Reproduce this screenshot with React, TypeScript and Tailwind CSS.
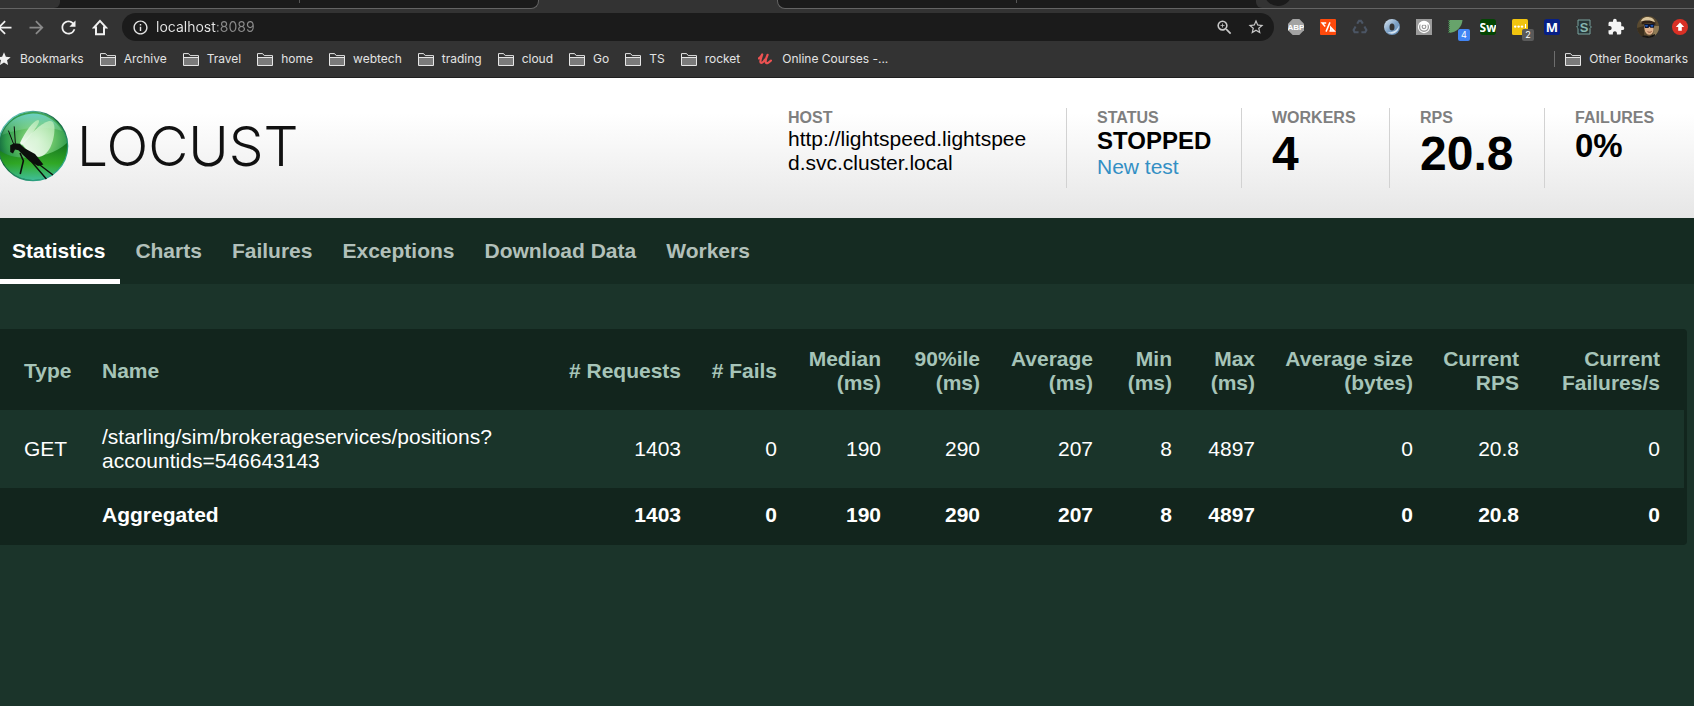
import React from 'react';
import {
  MdArrowBack,
  MdArrowForward,
  MdExtension,
  MdInfoOutline,
  MdRefresh,
  MdStar,
  MdStarBorder,
  MdZoomIn,
} from 'react-icons/md';

function HomeIcon() {
  return (
    <svg width="16" height="17" viewBox="0 0 16 17" fill="none" stroke="#f1f1f1" strokeWidth="2">
      <path d="M8 1.9 1.9 8.6H4V15.2H12V8.6H14.1Z" />
    </svg>
  );
}

function FolderIcon() {
  return (
    <svg width="16" height="13" viewBox="0 0 16 13" className="shrink-0">
      <path d="M.5 12.5V.6H5.6L7.2 2.6H15.5V12.5Z" fill="#333333" stroke="#e6e6e6" />
      <path d="M1 4.5H15V12H1Z" fill="#7b7b7b" />
      <path d="M1 4.5H15" stroke="#e6e6e6" />
    </svg>
  );
}

function UdemyIcon() {
  return (
    <svg width="14" height="12" viewBox="0 0 14 12" fill="none" stroke="#ec5252" strokeLinecap="round" strokeLinejoin="round" className="shrink-0">
      <path d="M.8 5.4C2.3 4.6 3.4 3 4.2 1.4 3.4 4 2.2 7 2.4 8.8 2.7 11 5.4 9.6 7.2 6.4" strokeWidth="2.2" />
      <path d="M9.6 1.8C8.4 4.4 7.2 7.6 7.8 9.4 8.4 11 11 9.8 13 7.6" strokeWidth="2.2" />
    </svg>
  );
}

function AbpIcon() {
  return (
    <svg width="16" height="16" viewBox="0 0 16 16">
      <path d="M4.7 0H11.3L16 4.7V11.3L11.3 16H4.7L0 11.3V4.7Z" fill="#a3a3a3" />
      <text x="8" y="11" textAnchor="middle" fontFamily="Liberation Sans, sans-serif" fontSize="8" fontWeight="700" fill="#fff">ABP</text>
    </svg>
  );
}

function SlashIcon() {
  return (
    <svg width="16" height="16" viewBox="0 0 16 16">
      <rect width="16" height="16" rx="1" fill="#ff4a0c" />
      <g fill="none" stroke="#fff" strokeWidth="1.5">
        <path d="M6.2 4H2.2L5.2 7.4" />
        <path d="M10 3.4 6 12.6" />
        <path d="M9.4 12H14.2L10.8 8.4V12" />
      </g>
    </svg>
  );
}

function RecycleIcon() {
  return (
    <svg width="16" height="16" viewBox="0 0 16 16" fill="none" stroke="#4b5564" strokeWidth="2.1">
      <path d="M5.2 4.8 7 1.9H9L10.8 4.6" />
      <path d="M12.4 7.4 14.4 11 13.2 13.2H9.4" />
      <path d="M6.6 13.2H2.6L1.6 11 3.6 7.4" />
    </svg>
  );
}

function RingIcon() {
  return (
    <svg width="16" height="16" viewBox="0 0 16 16">
      <defs>
        <linearGradient id="ring" x1="0" y1="0" x2="1" y2="1">
          <stop offset="0" stopColor="#e3edf6" />
          <stop offset=".5" stopColor="#7fa3c7" />
          <stop offset="1" stopColor="#5e88b4" />
        </linearGradient>
      </defs>
      <circle cx="8" cy="8" r="8" fill="url(#ring)" />
      <path d="M3.2 13A7 7 0 0 0 14.6 6.4C14 11 8 14 3.2 13Z" fill="#d6e4f1" />
      <ellipse cx="8" cy="8" rx="2.5" ry="3.6" fill="#333333" />
    </svg>
  );
}

function SwirlIcon() {
  return (
    <svg width="16" height="16" viewBox="0 0 16 16">
      <rect width="16" height="16" fill="#9b9b9b" />
      <circle cx="8" cy="8" r="5.6" fill="none" stroke="#fff" strokeWidth="1.1" />
      <path d="M2.6 4.6C5 1.8 11 1.8 13.4 4.6L11.4 5.8H4.6Z" fill="#fff" />
      <circle cx="8" cy="7.8" r="3.1" fill="none" stroke="#fff" strokeWidth="1.3" />
      <circle cx="8" cy="7.8" r="1.2" fill="#fff" />
    </svg>
  );
}

function LeafIcon() {
  return (
    <svg width="16" height="16" viewBox="0 0 16 16">
      <path d="M1 1H14.5C14 8 8.6 13.6 1 14Z" fill="#67a36b" />
      <path d="M1 1V14.5" stroke="#3f6d46" strokeWidth="2" strokeDasharray="1 1" />
    </svg>
  );
}

function SwIcon() {
  return (
    <svg width="16" height="16" viewBox="0 0 16 16">
      <rect width="16" height="16" rx="3" fill="#034503" />
      <text x="8" y="13" textAnchor="middle" fontFamily="Open Sans, sans-serif" fontSize="12" fontWeight="700" fill="#fff">Sw</text>
    </svg>
  );
}

function DotsIcon() {
  return (
    <svg width="16" height="16" viewBox="0 0 16 16">
      <rect width="16" height="16" rx="1.5" fill="#f1c40f" />
      <g fill="#fff">
        <circle cx="3.2" cy="7.6" r="1.2" />
        <circle cx="6.6" cy="7.6" r="1.2" />
        <circle cx="10" cy="7.6" r="1.2" />
        <rect x="13" y="5" width="1" height="4" />
      </g>
    </svg>
  );
}

function MIcon() {
  return (
    <svg width="16" height="16" viewBox="0 0 16 16">
      <rect width="16" height="16" rx="2.5" fill="#071f86" />
      <text x="8" y="12.8" textAnchor="middle" fontFamily="Open Sans, sans-serif" fontSize="13" fontWeight="700" fill="#fff">M</text>
    </svg>
  );
}

function BraceIcon() {
  return (
    <svg width="16" height="16" viewBox="0 0 16 16">
      <path d="M2 1H14V6.6L15.4 8 14 9.4V15H2V9.4L.6 8 2 6.6Z" fill="#263537" stroke="#7aa39f" strokeWidth="1" />
      <text x="8" y="12.8" textAnchor="middle" fontFamily="Liberation Sans, sans-serif" fontSize="13" fontWeight="700" fill="#86b5b0">S</text>
    </svg>
  );
}

function AvatarIcon() {
  return (
    <svg width="22" height="22" viewBox="0 0 22 22">
      <defs>
        <clipPath id="face">
          <circle cx="11" cy="11" r="11" />
        </clipPath>
      </defs>
      <g clipPath="url(#face)">
        <rect width="22" height="22" fill="#5a4a30" />
        <path d="M0 12 7 10V22H0Z" fill="#3a2f1e" />
        <path d="M17 10H22V20H16Z" fill="#8e7a55" />
        <path d="M7.5 8H16.5V14C16.2 17.2 14.6 18.8 12.6 18.8 9.8 18.8 8 16.6 7.5 13Z" fill="#e0b18b" />
        <path d="M3.6 6.6C4.4 1.4 9 .6 12.4 1.2 16.4 1.8 18 4.6 18.2 7.4L8 6.4Z" fill="#d9c49c" />
        <path d="M4 5.6C8 4 14.4 4 18.4 6.6V9C14 6.8 9 7 5 8.4Z" fill="#2f2015" />
        <path d="M7 8H17.4L17 11.8H13.4L12.4 10.4 11.4 12H8Z" fill="#0b1430" />
        <path d="M8 9H11L10.4 10.8H8.6ZM13.4 9H16.4L16 10.8H14Z" fill="#1d55b4" />
        <path d="M10.6 15.6C12 16.6 13.6 16.4 14.6 15.4" stroke="#8d4c38" strokeWidth="1" fill="none" />
        <path d="M4 22C5 18.4 9 19.4 12 20.4L18 18V22Z" fill="#151515" />
      </g>
    </svg>
  );
}

function UpdateIcon() {
  return (
    <svg width="16" height="16" viewBox="0 0 16 16">
      <circle cx="8" cy="8" r="8" fill="#d93025" />
      <path d="M8 3.6 12.2 8H9.8V11.8H6.2V8H3.8Z" fill="#fff" />
    </svg>
  );
}

function LocustBall() {
  return (
    <svg width="69" height="72" viewBox="0 0 69 72" className="shrink-0">
      <defs>
        <radialGradient id="ball" cx="0.56" cy="0.42" r="0.6">
          <stop offset="0" stopColor="#b9ecb8" />
          <stop offset=".4" stopColor="#68c368" />
          <stop offset=".75" stopColor="#2f9b4c" />
          <stop offset="1" stopColor="#0d5d3c" />
        </radialGradient>
        <linearGradient id="rim" x1="0" y1="0" x2="0.8" y2="1">
          <stop offset="0" stopColor="#7fe6ea" />
          <stop offset=".5" stopColor="#13643a" />
          <stop offset="1" stopColor="#35b598" />
        </linearGradient>
        <linearGradient id="low" x1="0" y1="0" x2="0" y2="1">
          <stop offset="0" stopColor="#0b6a17" />
          <stop offset=".55" stopColor="#2fa81f" />
          <stop offset="1" stopColor="#46c9a4" />
        </linearGradient>
        <linearGradient id="wing" x1="0" y1="1" x2="1" y2="0">
          <stop offset="0" stopColor="#fff" stopOpacity=".95" />
          <stop offset="1" stopColor="#b9ecb4" stopOpacity=".75" />
        </linearGradient>
        <linearGradient id="sheen" x1="0" y1="0" x2="0" y2="1">
          <stop offset="0" stopColor="#6fd4d0" stopOpacity=".9" />
          <stop offset="1" stopColor="#9ce3a8" stopOpacity=".15" />
        </linearGradient>
      </defs>
      <circle cx="33" cy="36" r="34.6" fill="url(#ball)" stroke="url(#rim)" strokeWidth="1.4" />
      <path d="M-1 40C14 52 48 50 67 33A34 34 0 0 1 33 70 34 34 0 0 1-1 40Z" fill="url(#low)" opacity=".88" />
      <path d="M2 25A33 33 0 0 1 62 21C46 15 20 18 2 25Z" fill="url(#sheen)" />
      <path d="M20 33C25 22 33 11 38 10 40 10 39 13 37 16 33 23 27 30 22 35Z" fill="url(#wing)" />
      <path d="M22 34C29 25 41 13 49 11 55 10 55 18 54 25 52 38 46 46 39 47 32 46 27 40 22 34Z" fill="url(#wing)" />
      <path d="M10.2 35.2 14.2 33.2 19.6 33.8 25 38.4 35 44 39 49 43.4 54.4 38 56 30 51.4 23 45 18.4 40.2 15 39.6 13 43.4 10.2 42Z" fill="#0c0f0c" />
      <g fill="none" stroke="#0c0f0c">
        <path d="M13.6 34 8.4 20.6M15.4 33.6 14.2 16.4" strokeWidth="1" />
        <path d="M20 43 23.4 50.8 20.2 64" strokeWidth="1.6" />
        <path d="M31 51 46.4 69M36 52 53 65" strokeWidth="1.4" />
      </g>
    </svg>
  );
}

const folders = ['Archive', 'Travel', 'home', 'webtech', 'trading', 'cloud', 'Go', 'TS', 'rocket'];

const extensions: { label: string; icon: React.ReactNode; badge?: string; blue?: boolean }[] = [
  { label: 'Adblock Plus', icon: <AbpIcon /> },
  { label: 'Code snippets', icon: <SlashIcon /> },
  { label: 'Recycle', icon: <RecycleIcon /> },
  { label: 'Ring', icon: <RingIcon /> },
  { label: 'Swirl', icon: <SwirlIcon /> },
  { label: 'Leaf', icon: <LeafIcon />, badge: '4', blue: true },
  { label: 'Sw', icon: <SwIcon /> },
  { label: 'Notes', icon: <DotsIcon />, badge: '2' },
  { label: 'M', icon: <MIcon /> },
  { label: 'Braces', icon: <BraceIcon /> },
  { label: 'Extensions', icon: <MdExtension size={18} color="#f5f5f5" /> },
  { label: 'Profile', icon: <AvatarIcon /> },
  { label: 'Update', icon: <UpdateIcon /> },
];

function ToolButton({ label, children }: { label: string; children: React.ReactNode }) {
  return (
    <button type="button" aria-label={label} className="relative flex h-7 w-8 shrink-0 items-center justify-center">
      {children}
    </button>
  );
}

function TabStrip() {
  return (
    <div className="flex h-[9px] overflow-hidden bg-[#333333]">
      <div className="flex w-[539px] shrink-0 rounded-br-lg border-r border-b border-[#646464] bg-[#1b1b1b]">
        <div className="w-[60px] rounded-br-md bg-[#333333]" />
        <div className="h-[3px] w-60 border-r border-[#555555]" />
      </div>
      <div className="w-[238px] shrink-0" />
      <div className="flex flex-1 rounded-bl-lg border-b border-l border-[#646464] bg-[#1b1b1b]">
        <div className="h-[3px] w-[239px] border-r border-[#555555]" />
        <div className="w-[239px]" />
        <div className="flex flex-1 items-end rounded-bl-md bg-[#333333] pb-0.5 pl-2">
          <div className="h-7 w-7 shrink-0 rounded-full bg-[#1b1b1b]" />
        </div>
      </div>
    </div>
  );
}

function Toolbar() {
  return (
    <div className="flex h-9 items-center overflow-hidden">
      <div className="-ml-3 flex">
        <ToolButton label="Back"><MdArrowBack size={21} color="#f1f1f1" /></ToolButton>
        <ToolButton label="Forward"><MdArrowForward size={21} color="#8a8a8a" /></ToolButton>
        <ToolButton label="Reload"><MdRefresh size={21} color="#f1f1f1" /></ToolButton>
        <ToolButton label="Home"><HomeIcon /></ToolButton>
      </div>
      <div className="mx-1.5 flex h-7 flex-1 items-center rounded-full bg-[#1b1b1b] pr-0.5 pl-2.5">
        <MdInfoOutline size={17} color="#e4e4e4" className="shrink-0" />
        <input
          type="text"
          aria-label="Address"
          defaultValue="localhost:8089"
          className="ml-[7px] min-w-0 flex-1 bg-[linear-gradient(to_right,#e8e8e8_60px,#8b8b8b_60px)] bg-clip-text font-['Inter',sans-serif] text-sm text-transparent outline-none"
        />
        <ToolButton label="Zoom"><MdZoomIn size={19} color="#c8c8c8" /></ToolButton>
        <ToolButton label="Bookmark this tab"><MdStarBorder size={18} color="#c8c8c8" /></ToolButton>
      </div>
      <div className="-mr-0.5 flex">
        {extensions.map((e) => (
          <ToolButton key={e.label} label={e.label}>
            {e.icon}
            {e.badge && (
              <span
                className={
                  e.blue
                    ? "absolute right-0.5 bottom-0 flex h-3 w-3 items-center justify-center rounded-xs bg-[#4285f4] font-['Inter',sans-serif] text-[9px] text-white"
                    : "absolute right-0.5 bottom-0 flex h-3 w-3 items-center justify-center rounded-xs bg-[#5a5a5a] font-['Inter',sans-serif] text-[9px] text-white"
                }
              >
                {e.badge}
              </span>
            )}
          </ToolButton>
        ))}
      </div>
    </div>
  );
}

function BookmarksBar() {
  return (
    <div className="flex h-8 items-center gap-4 overflow-hidden pr-1.5 pb-1 font-['Inter',sans-serif] text-xs whitespace-nowrap text-[#e3e3e3]">
      <a href="#bookmarks" className="-ml-1 flex items-center gap-2">
        <MdStar size={16} color="#f1f1f1" className="shrink-0" />
        Bookmarks
      </a>
      {folders.map((f) => (
        <a key={f} href={`#${f}`} className="flex items-center gap-2">
          <FolderIcon />
          {f}
        </a>
      ))}
      <a href="#courses" className="ml-0.5 flex items-center gap-2.5">
        <UdemyIcon />
        Online Courses -...
      </a>
      <a href="#other" className="ml-auto flex items-center gap-2">
        <span className="mr-0.5 h-4 w-px bg-[#6e6e6e]" />
        <FolderIcon />
        Other Bookmarks
      </a>
    </div>
  );
}

function Stat({ label, box, children }: { label: string; box: string; children: React.ReactNode }) {
  return (
    <div className={`h-20 ${box}`}>
      <div className="text-base leading-[19px] font-bold text-[#7f7f7f]">{label}</div>
      {children}
    </div>
  );
}

function Header() {
  return (
    <header className="flex h-[140px] items-start justify-between bg-linear-to-b from-white from-25% to-[#e6e6e6] pt-[30px] text-black">
      <a href="#home" className="mt-0.5 flex items-center gap-2 font-['Inter',sans-serif] text-[55px] leading-[72px] font-light text-[#111111]">
        <LocustBall />
        LOCUST
      </a>
      <div className="flex">
        <Stat label="HOST" box="w-[278px] pr-9">
          <div className="w-60 leading-6 break-all">http://lightspeed.lightspeed.svc.cluster.local</div>
        </Stat>
        <Stat label="STATUS" box="w-[175px] border-l border-[#d2d2d2] pl-[30px]">
          <div className="text-2xl leading-7 font-bold">STOPPED</div>
          <a href="#new" className="block leading-6 text-[#338fc4]">New test</a>
        </Stat>
        <Stat label="WORKERS" box="w-[148px] border-l border-[#d2d2d2] pl-[30px]">
          <div className="text-5xl leading-[54px] font-bold">4</div>
        </Stat>
        <Stat label="RPS" box="w-[155px] border-l border-[#d2d2d2] pl-[30px]">
          <div className="text-5xl leading-[54px] font-bold">20.8</div>
        </Stat>
        <Stat label="FAILURES" box="w-[150px] border-l border-[#d2d2d2] pl-[30px]">
          <div className="text-[33px] leading-[37px] font-bold">0%</div>
        </Stat>
      </div>
    </header>
  );
}

const tabs = ['Charts', 'Failures', 'Exceptions', 'Download Data', 'Workers'];

function Nav() {
  return (
    <nav className="flex h-[66px] bg-[#152b22] font-bold whitespace-nowrap text-[#b2c0ba]">
      <a href="#statistics" className="border-b-5 border-white pr-[15px] pl-3 leading-[66px] text-white">Statistics</a>
      {tabs.map((t) => (
        <a key={t} href={`#${t}`} className="px-[15px] leading-[66px]">{t}</a>
      ))}
    </nav>
  );
}

const columns = [
  '# Requests',
  '# Fails',
  'Median (ms)',
  '90%ile (ms)',
  'Average (ms)',
  'Min (ms)',
  'Max (ms)',
  'Average size (bytes)',
  'Current RPS',
  'Current Failures/s',
];
const values = ['1403', '0', '190', '290', '207', '8', '4897', '0', '20.8', '0'];

function StatsTable() {
  return (
    <div className="mt-[45px] mr-[7px] rounded-r-sm bg-[#12251d] py-[3px] pr-[3px]">
      <table className="w-full table-fixed leading-6">
        <colgroup>
          <col className="w-[86px]" />
          <col />
          <col className="w-36" />
          <col className="w-24" />
          <col className="w-[104px]" />
          <col className="w-[99px]" />
          <col className="w-[113px]" />
          <col className="w-[79px]" />
          <col className="w-[83px]" />
          <col className="w-[158px]" />
          <col className="w-[106px]" />
          <col className="w-[149px]" />
        </colgroup>
        <thead className="text-[#a6c4b8]">
          <tr>
            <th className="py-[15px] pl-6 text-left">Type</th>
            <th className="px-4 py-[15px] text-left">Name</th>
            {columns.map((c) => (
              <th key={c} className="py-[15px] pr-4 text-right last:pr-6">{c}</th>
            ))}
          </tr>
        </thead>
        <tbody className="text-white">
          <tr className="bg-[#1a342a]">
            <td className="py-[15px] pl-6">GET</td>
            <td className="px-4 py-[15px]">/starling/sim/brokerageservices/positions?accountids=546643143</td>
            {values.map((v, i) => (
              <td key={columns[i]} className="py-[15px] pr-4 text-right last:pr-6">{v}</td>
            ))}
          </tr>
          <tr className="font-bold">
            <td className="py-[15px] pl-6" />
            <td className="px-4 py-[15px]">Aggregated</td>
            {values.map((v, i) => (
              <td key={columns[i]} className="py-[15px] pr-4 text-right last:pr-6">{v}</td>
            ))}
          </tr>
        </tbody>
      </table>
    </div>
  );
}

export default function App() {
  return (
    <div className="min-h-screen overflow-hidden bg-[#1b342a] font-['Liberation_Sans',Arial,sans-serif] text-[21px]">
      <div className="border-b border-[#1f1f1f] bg-[#333333]">
        <TabStrip />
        <Toolbar />
        <BookmarksBar />
      </div>
      <Header />
      <Nav />
      <StatsTable />
    </div>
  );
}
